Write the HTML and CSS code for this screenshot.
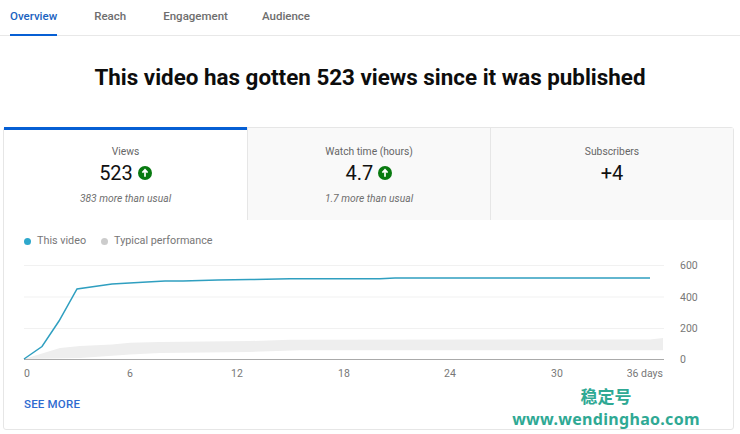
FILE: index.html
```html
<!DOCTYPE html>
<html lang="en">
<head>
    <meta charset="UTF-8">
    <title>Video analytics</title>
    <link rel="stylesheet" href="styles.css">
</head>
<body>
    <div class="tabs">
        <div class="tab active">Overview</div>
        <div class="tab">Reach</div>
        <div class="tab">Engagement</div>
        <div class="tab lastTab">Audience</div>
    </div>
    <h1 class="headline">This video has gotten 523 views since it was published</h1>
    <div class="card">
        <div class="metrics">
            <div class="metric selected">
                <div class="metricName">Views</div>
                <div class="metricValue">523
                    <svg class="upIcon" viewBox="0 0 14 14"><circle cx="7" cy="7" r="7" fill="#087a10"/><path d="M7 10.8V4.2M4.4 6.6 7 3.8l2.6 2.8" fill="none" stroke="#fff" stroke-width="1.7"/></svg>
                </div>
                <div class="metricNote">383 more than usual</div>
            </div>
            <div class="metric">
                <div class="metricName">Watch time (hours)</div>
                <div class="metricValue">4.7
                    <svg class="upIcon" viewBox="0 0 14 14"><circle cx="7" cy="7" r="7" fill="#087a10"/><path d="M7 10.8V4.2M4.4 6.6 7 3.8l2.6 2.8" fill="none" stroke="#fff" stroke-width="1.7"/></svg>
                </div>
                <div class="metricNote">1.7 more than usual</div>
            </div>
            <div class="metric">
                <div class="metricName">Subscribers</div>
                <div class="metricValue">+4</div>
            </div>
        </div>
        <div class="legend">
            <span class="legendItem"><i class="dot blue"></i>This video</span>
            <span class="legendItem"><i class="dot gray"></i>Typical performance</span>
        </div>
        <svg class="chart" width="690" height="125" viewBox="20 258 690 125">
            <g stroke="#f1f1f1" stroke-width="1">
                <line x1="24" x2="664" y1="265.5" y2="265.5"/>
                <line x1="24" x2="664" y1="297" y2="297"/>
                <line x1="24" x2="664" y1="328.5" y2="328.5"/>
            </g>
            <path fill="#eeeeee" d="M24 359 60 348 80 346 112 344.5 130 342.7 160 342 250 341 290 339.8 650 339.5 663 338V350.3H300L250 352 160 353 130 354.5 80 358Z"/>
            <line x1="24" x2="664" y1="359.5" y2="359.5" stroke="#aaaaaa"/>
            <path fill="none" stroke="#2f9fc0" stroke-width="1.5" d="M24 359 42 346.5 59 321 77 289 112 284 147 282 165 281 183 281 218 280 250 279.5 290 278.8 380 278.8 395 278 650 278"/>
            <g class="axis">
                <text x="24" y="377">0</text>
                <text x="130" y="377" text-anchor="middle">6</text>
                <text x="237" y="377" text-anchor="middle">12</text>
                <text x="344" y="377" text-anchor="middle">18</text>
                <text x="450" y="377" text-anchor="middle">24</text>
                <text x="557" y="377" text-anchor="middle">30</text>
                <text x="663" y="377" text-anchor="end">36 days</text>
                <text x="680" y="269">600</text>
                <text x="680" y="301">400</text>
                <text x="680" y="332">200</text>
                <text x="680" y="363">0</text>
            </g>
        </svg>
        <div class="seeMore">SEE MORE</div>
        <div class="watermark">稳定号<br><span class="watermarkUrl">www.wendinghao.com</span></div>
    </div>
</body>
</html>
```

FILE: styles.css
```css
* {
    box-sizing: border-box;
}
body {
    margin: 0;
    height: 434px;
    overflow: hidden;
    background-color: white;
    font-family: Roboto, "Liberation Sans", sans-serif;
}
.tabs {
    height: 36px;
    padding-left: 10px;
    border-bottom: 1px solid #e8e8e8;

    display: flex;
    flex-direction: row;
    gap: 37px;
}
.tab {
    height: 36px;
    padding-top: 9px;
    font-size: 11.5px;
    font-weight: 500;
    color: #6e6e6e;
}
.tab.active {
    color: #1a62c0;
    border-bottom: 2px solid #065fd4;
}
.lastTab {
    margin-left: -3px;
}
.headline {
    margin: 26px 0 0;
    text-align: center;
    font-size: 22.4px;
    line-height: 30px;
    font-weight: 700;
    color: #0d0d0d;
}
.card {
    position: relative;
    margin: 35px 0 0 3px;
    width: 731px;
    height: 303px;
    border: 1px solid #e6e6e6;
    border-radius: 3px;
}
.metrics {
    height: 92px;
    display: grid;
    grid-template-columns: 243px 243px 1fr;
}
.metric {
    padding-top: 17px;
    background-color: #f9f9f9;
    border-left: 1px solid #e6e6e6;
    text-align: center;
}
.metric.selected {
    background-color: white;
    border-left: none;
    border-top: 3px solid #065fd4;
    padding-top: 15px;
    margin-top: -1px;
    height: 93px;
}
.metricName {
    font-size: 10.3px;
    line-height: 14px;
    color: #666666;
}
.metricValue {
    margin-top: 2px;
    font-size: 20px;
    line-height: 24px;
    color: #111111;

    display: flex;
    justify-content: center;
    align-items: center;
    gap: 5px;
}
.upIcon {
    width: 14px;
    height: 14px;
}
.metricNote {
    margin-top: 7px;
    font-size: 10.3px;
    line-height: 14px;
    font-style: italic;
    color: #6f6f6f;
}
.legend {
    margin: 14px 0 0 20px;
    display: flex;
    gap: 15px;
    font-size: 10.8px;
    line-height: 14px;
    color: #777777;
}
.legendItem {
    display: flex;
    align-items: center;
}
.dot {
    width: 7px;
    height: 7px;
    margin-right: 6px;
    border-radius: 50%;
}
.dot.blue {
    background-color: #2ea8cc;
}
.dot.gray {
    background-color: #cccccc;
}
.chart {
    display: block;
    margin: 10px 0 0 16px;
}
.axis text {
    font-family: Roboto, sans-serif;
    font-size: 10.5px;
    fill: #777777;
}
.seeMore {
    margin: 14px 0 0 20px;
    font-size: 11.5px;
    font-weight: 500;
    letter-spacing: 0.2px;
    color: #2f6bd0;
}
.watermark {
    position: absolute;
    left: 507px;
    top: 257px;
    width: 190px;
    text-align: center;
    font-family: "Noto Sans CJK SC", sans-serif;
    font-size: 17px;
    line-height: 22px;
    font-weight: 700;
    color: #2fa994;
}
.watermarkUrl {
    font-family: "Noto Sans", sans-serif;
    font-size: 16px;
    letter-spacing: 0.3px;
    white-space: nowrap;
}
```
